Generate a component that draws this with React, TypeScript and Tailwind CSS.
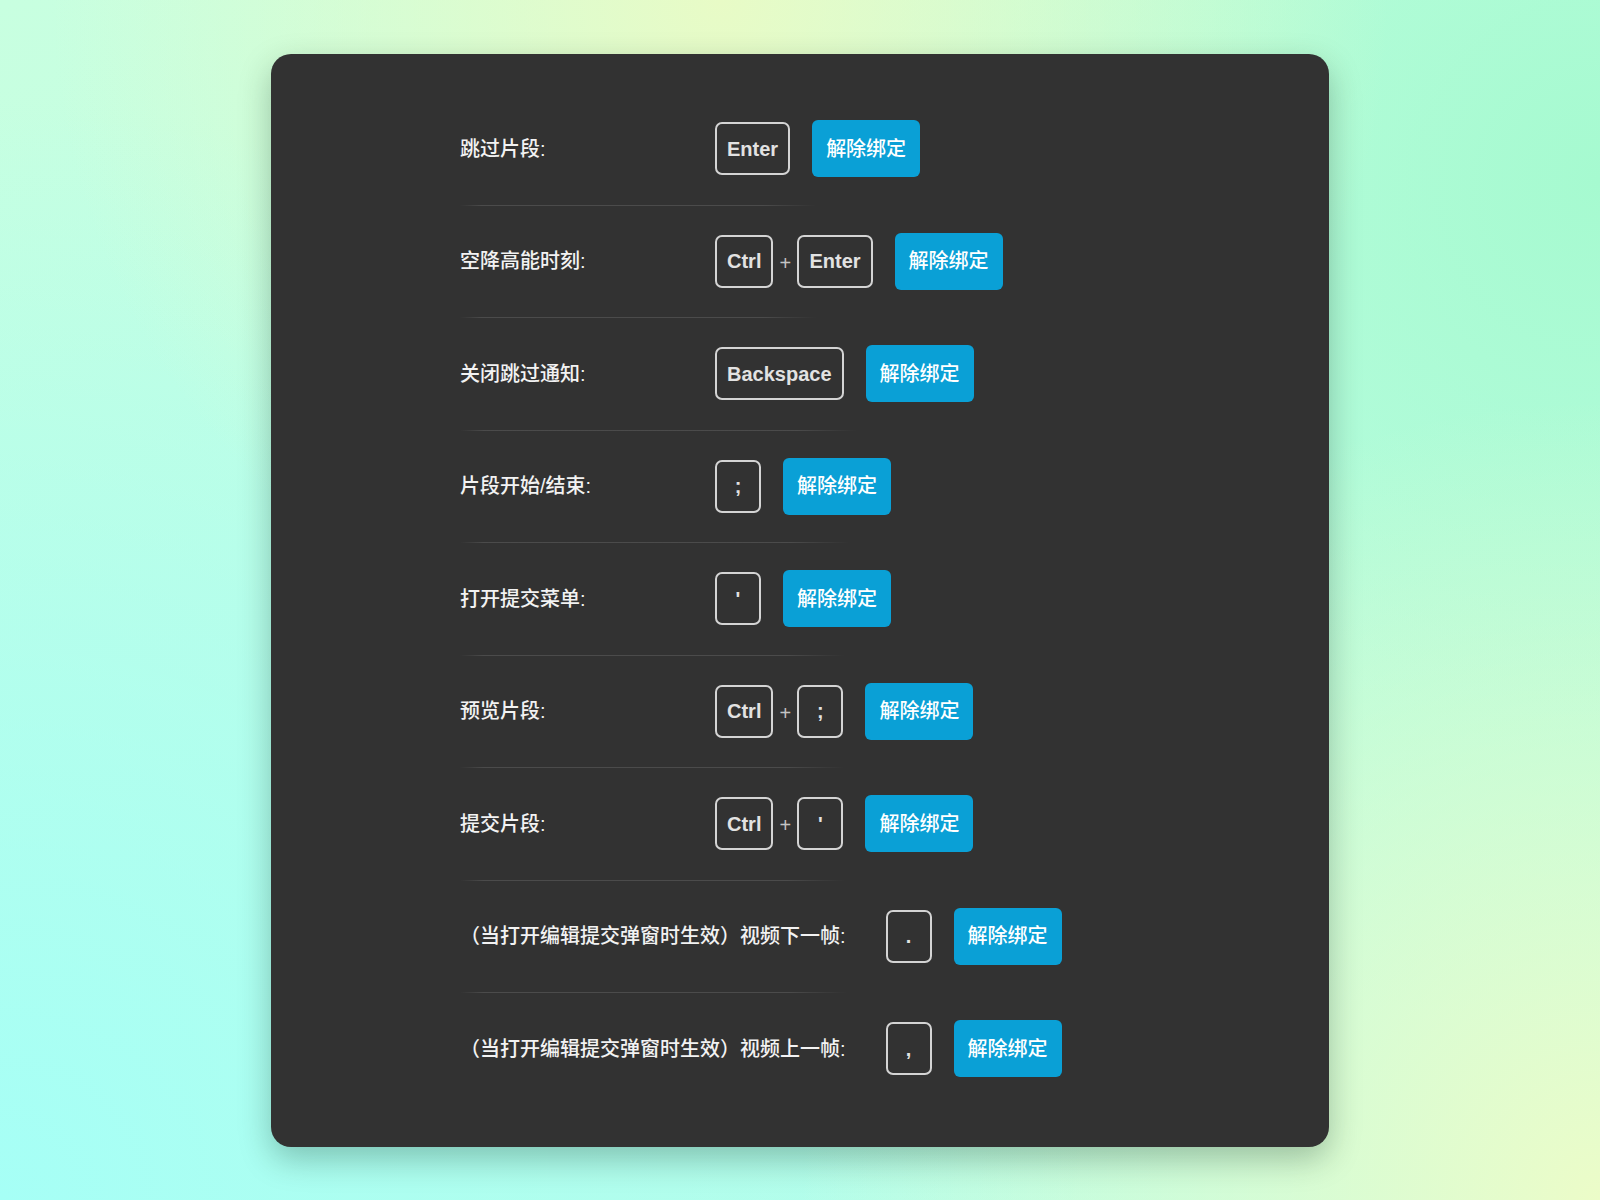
import { FC } from 'react';

type Binding = { label: string; keys: string[]; line: string };

const bindings: Binding[] = [
  { label: '跳过片段:', keys: ['Enter'], line: 'w-[357px]' },
  { label: '空降高能时刻:', keys: ['Ctrl', 'Enter'], line: 'w-[357px]' },
  { label: '关闭跳过通知:', keys: ['Backspace'], line: 'w-[397px]' },
  { label: '片段开始/结束:', keys: [';'], line: 'w-[390px]' },
  { label: '打开提交菜单:', keys: ["'"], line: 'w-[385px]' },
  { label: '预览片段:', keys: ['Ctrl', ';'], line: 'w-[385px]' },
  { label: '提交片段:', keys: ['Ctrl', "'"], line: 'w-[385px]' },
  { label: '（当打开编辑提交弹窗时生效）视频下一帧:', keys: ['.'], line: 'w-[387px]' },
  { label: '（当打开编辑提交弹窗时生效）视频上一帧:', keys: [','], line: '' },
];

const font = 'font-["Liberation_Sans","Noto_Sans_CJK_SC",sans-serif]';

const Key: FC<{ name: string }> = ({ name }) => (
  <span className="h-[53px] min-w-[46px] px-[10px] flex items-center justify-center rounded-[7px] border-2 border-[#d4d4d4] text-[20px] font-bold text-[#e2e2e2] leading-none">
    {name}
  </span>
);

const Row: FC<{ b: Binding }> = ({ b }) => (
  <div className="h-[111.5px] flex items-center">
    <div className="min-w-[255px] pr-[40px] text-[20px] font-medium text-[#f2f2f2] whitespace-nowrap">{b.label}</div>
    <div className="flex items-center">
      {b.keys.map((k, i) => (
        <div key={k + i} className="flex items-center">
          {i > 0 && <span className="w-[24px] text-center text-[20px] text-[#c4c4c4] pt-[3px]">+</span>}
          <Key name={k} />
        </div>
      ))}
    </div>
    <button className="ml-[22px] h-[57px] px-[14px] rounded-[6px] bg-[#0aa0d6] text-[20px] font-medium text-white whitespace-nowrap">
      解除绑定
    </button>
  </div>
);

export default function App() {
  return (
    <div className={`${font} w-full min-h-[1200px] flex justify-center pt-[54px] bg-[radial-gradient(circle_at_45%_0%,#e8fbc6_0%,transparent_45%),radial-gradient(circle_at_100%_100%,#ecfcc8_0%,transparent_40%),radial-gradient(circle_at_0%_100%,#a6fff6_0%,transparent_55%),radial-gradient(circle_at_100%_15%,#a6fad0_0%,transparent_45%),linear-gradient(160deg,#c8ffe0,#b4fde8)]`}>
      <div className="w-[1058px] h-[1093px] rounded-[20px] bg-[#323232] shadow-[0_12px_32px_rgba(0,40,20,0.28)] pl-[189px] pt-[39px]">
        {bindings.map((b) => (
          <div key={b.label}>
            <Row b={b} />
            {b.line && (
              <div className={`${b.line} h-px bg-[linear-gradient(to_right,transparent,rgba(255,255,255,0.12)_6%,rgba(255,255,255,0.12)_85%,transparent)]`} />
            )}
          </div>
        ))}
      </div>
    </div>
  );
}
